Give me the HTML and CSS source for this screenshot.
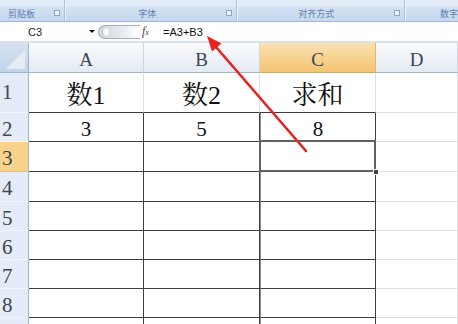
FILE: index.html
```html
<!DOCTYPE html>
<html lang="zh-CN">
<head>
  <meta charset="UTF-8" />
  <meta name="viewport" content="width=device-width, initial-scale=1" />
  <title>求和</title>
  <link rel="stylesheet" href="styles.css">
</head>
<body>
  <div class="ribbon">
    <div class="group g-clip"><span class="label">剪贴板</span><span class="launcher"></span></div>
    <div class="group g-font"><span class="label">字体</span><span class="launcher"></span></div>
    <div class="group g-align"><span class="label">对齐方式</span><span class="launcher"></span></div>
    <div class="group g-num"><span class="label">数字</span></div>
  </div>

  <div class="formula-bar">
    <div class="name-box"><span class="ref">C3</span><span class="drop"></span></div>
    <div class="pill"><span class="knob"></span></div>
    <div class="fx"><i>f</i><small>x</small></div>
    <div class="formula">=A3+B3</div>
  </div>

  <div class="sheet">
    <!-- header row -->
    <div class="corner"><span class="tri"></span></div>
    <div class="ch">A</div>
    <div class="ch">B</div>
    <div class="ch sel">C</div>
    <div class="ch">D</div>

    <div class="rh r1">1</div>
    <div class="cell title">数1</div>
    <div class="cell title">数2</div>
    <div class="cell title colc">求和</div>
    <div class="cell"></div>

    <div class="rh">2</div>
    <div class="cell b num">3</div>
    <div class="cell b num">5</div>
    <div class="cell b num colc">8</div>
    <div class="cell"></div>

    <div class="rh sel">3</div>
    <div class="cell b"></div>
    <div class="cell b"></div>
    <div class="cell b colc active"></div>
    <div class="cell"></div>

    <div class="rh">4</div>
    <div class="cell b"></div>
    <div class="cell b"></div>
    <div class="cell b colc"></div>
    <div class="cell"></div>

    <div class="rh">5</div>
    <div class="cell b"></div>
    <div class="cell b"></div>
    <div class="cell b colc"></div>
    <div class="cell"></div>

    <div class="rh">6</div>
    <div class="cell b"></div>
    <div class="cell b"></div>
    <div class="cell b colc"></div>
    <div class="cell"></div>

    <div class="rh">7</div>
    <div class="cell b"></div>
    <div class="cell b"></div>
    <div class="cell b colc"></div>
    <div class="cell"></div>

    <div class="rh">8</div>
    <div class="cell b"></div>
    <div class="cell b"></div>
    <div class="cell b colc"></div>
    <div class="cell"></div>

    <!-- row 9, only its top edge shows -->
    <div class="rh"></div>
    <div class="cell b"></div>
    <div class="cell b"></div>
    <div class="cell b colc"></div>
    <div class="cell"></div>
  </div>

  <!-- red annotation arrow -->
  <svg class="arrow" width="458" height="324" viewBox="0 0 458 324">
    <line x1="306" y1="151" x2="216" y2="47" stroke="#e8231f" stroke-width="2.6" stroke-linecap="round" />
    <polygon points="207,36 221.5,43.5 212,51.5" fill="#e8231f" />
  </svg>
</body>
</html>
```

FILE: styles.css
```css
body {
  margin: 0;
  width: 458px;
  height: 324px;
  overflow: hidden;
  position: relative;
  background: #ffffff;
  font-family: "Liberation Sans", "Noto Sans CJK SC", sans-serif;
}

/* ribbon group labels */
.ribbon {
  display: flex;
  height: 21px;
  background: linear-gradient(#e2ebf6 0, #e2ebf6 6px, #d3e1f2 7px, #c6d8ef 21px);
  border-bottom: 1px solid #9fb8da;
}

.group {
  position: relative;
  display: flex;
  align-items: center;
  padding-top: 6px;
  box-sizing: border-box;
  border-right: 1px solid #a9c1e0;
  box-shadow: 1px 0 0 #eef4fb;
}

.g-clip { width: 67px; padding-left: 8px; }
.g-font { width: 175px; padding-left: 73px; }
.g-align { width: 171px; padding-left: 61px; }
.g-num { flex: 1; padding-left: 35px; border-right: none; box-shadow: none; }

.label {
  font-size: 9px;
  color: #5e7fae;
  white-space: nowrap;
}

.launcher {
  position: absolute;
  right: 4px;
  top: 10px;
  width: 4px;
  height: 4px;
  border: 1px solid #8ea6c6;
  background: #eef3fa;
}

/* formula bar */
.formula-bar {
  display: flex;
  align-items: center;
  height: 19px;
  background: #ffffff;
  border-bottom: 2px solid #d8e2ee;
}

.name-box {
  display: flex;
  align-items: center;
  width: 98px;
  height: 100%;
  box-sizing: border-box;
  padding-left: 28px;
  font-size: 11px;
  color: #1e1e1e;
}

.ref { flex: 1; }

.drop {
  width: 0;
  height: 0;
  margin-right: 3px;
  border-left: 3px solid transparent;
  border-right: 3px solid transparent;
  border-top: 3px solid #111111;
}

.pill {
  display: flex;
  align-items: center;
  width: 42px;
  height: 14px;
  box-sizing: border-box;
  border: 1px solid #a3acb8;
  border-right: none;
  border-radius: 8px 0 0 8px;
  background: linear-gradient(to right, #cfd6df, #e9edf2 60%, #ffffff);
}

.knob {
  width: 6px;
  height: 8px;
  margin-left: 3px;
  border-radius: 50%;
  background: #f4f6f9;
  border-left: 1px solid #b3bcc8;
}

.fx {
  width: 20px;
  font-family: "Liberation Serif", serif;
  color: #4a4a4a;
  font-size: 12px;
  padding-left: 2px;
}

.fx small {
  font-size: 8px;
  font-style: italic;
}

.formula {
  padding-left: 1px;
  font-size: 11px;
  color: #111111;
}

/* worksheet grid */
.sheet {
  display: grid;
  grid-template-columns: 29px 115px 116px 116px 1fr;
  grid-template-rows: 30px 40px 29px 30px 30px 29px 29px 29px 29px 12px;
  font-family: "Liberation Serif", "Noto Serif CJK SC", "Noto Sans CJK SC", serif;
}

.corner {
  position: relative;
  background: linear-gradient(#d5e1f0, #c3d4ea);
  border-right: 1px solid #9eb6ce;
  border-bottom: 1px solid #9eb6ce;
  box-sizing: border-box;
}

.tri {
  position: absolute;
  right: 3px;
  bottom: 3px;
  width: 0;
  height: 0;
  border-left: 19px solid transparent;
  border-bottom: 19px solid #e6ecf4;
}

.ch {
  display: flex;
  justify-content: center;
  align-items: center;
  padding-top: 4px;
  box-sizing: border-box;
  font-size: 19px;
  color: #3b4656;
  background: linear-gradient(#f9fafc, #e5ebf3);
  border-right: 1px solid #ccd7e5;
  border-bottom: 1px solid #9eb6ce;
}

.ch.sel {
  background: linear-gradient(#fbe2b2, #f3c471);
  border-right-color: #e6b668;
  border-bottom-color: #e2a64a;
}

.rh {
  display: flex;
  align-items: center;
  padding: 4px 0 0 2px;
  box-sizing: border-box;
  font-size: 21px;
  color: #3b4656;
  background: #e4ecf7;
  border-right: 1px solid #9eb6ce;
  border-bottom: 1px solid #f2f6fb;
}

.rh.r1 { padding-top: 0; }

.rh.sel {
  background: #f9d28c;
  border-bottom-color: #f0c070;
}

.cell {
  position: relative;
  display: flex;
  justify-content: center;
  align-items: center;
  box-sizing: border-box;
  border-right: 1px solid #dcdfe3;
  border-bottom: 1px solid #dcdfe3;
  color: #111111;
}

.cell.title {
  font-size: 26px;
  border-bottom-color: #3c3c3c;
}

.cell.b {
  border-right: 1px solid #404040;
  border-bottom: 1px solid #404040;
}

.cell.b.num {
  font-size: 21px;
  padding-top: 4px;
}

.cell.colc.b {
  border-left: 1px solid #8c8c8c;
}

.active::after {
  content: "";
  position: absolute;
  left: -2px;
  top: -2px;
  right: -1px;
  bottom: -1px;
  border: 2px solid #606060;
}

.active::before {
  content: "";
  position: absolute;
  right: -4px;
  bottom: -4px;
  width: 4px;
  height: 4px;
  background: #404040;
  border: 1px solid #ffffff;
  z-index: 2;
}

.arrow {
  position: absolute;
  left: 0;
  top: 0;
}
```
